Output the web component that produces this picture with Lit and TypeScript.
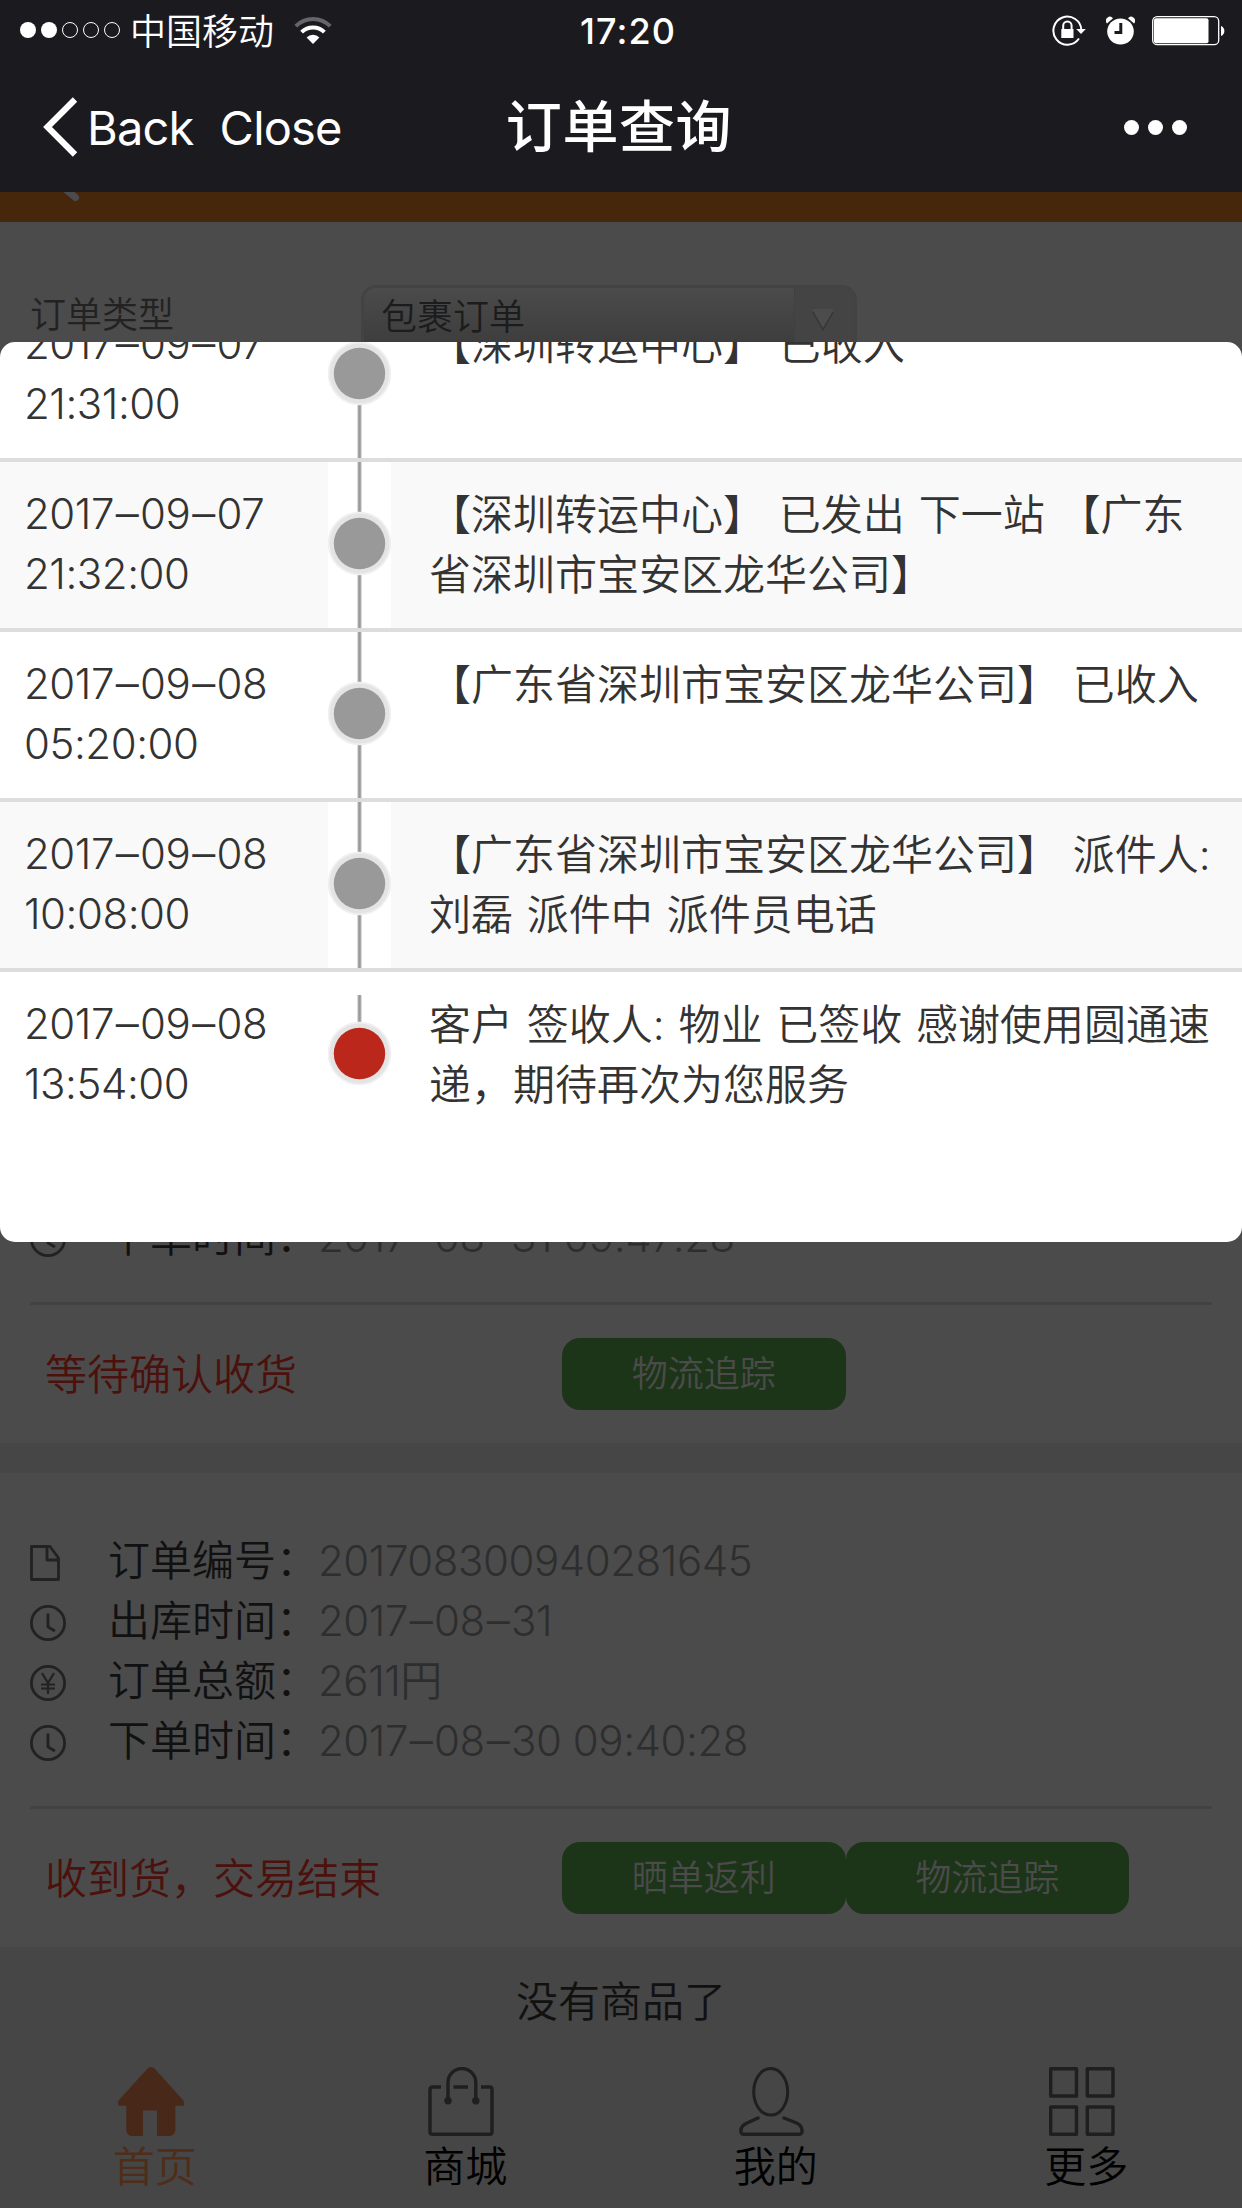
import { LitElement, html, svg, css } from "lit";
import { customElement, property } from "lit/decorators.js";
import { classMap } from "lit/directives/class-map.js";

const box = css`
  *,
  *::before,
  *::after {
    box-sizing: border-box;
  }
  svg {
    display: block;
    flex: none;
  }
`;

/* Numerals are set a little tight, with a wide dash between date parts. */
const numerals = css`
  .num {
    letter-spacing: -0.45px;
  }
  .dash {
    margin: 0 1.8px;
    font-size: 46px;
    line-height: 0;
    vertical-align: -1px;
  }
`;

const withDashes = (text: string) =>
  text.split("–").map((part, i) => (i ? html`<span class="dash">–</span>${part}` : part));

@customElement("status-bar")
class StatusBar extends LitElement {
  static styles = [
    box,
    css`
      :host {
        display: grid;
        grid-template-columns: 1fr auto 1fr;
        align-items: center;
        height: 62px;
        padding: 0 16px 0 19px;
        color: #fff;
      }
      .left {
        display: flex;
        align-items: center;
      }
      .carrier {
        margin: 0 20px 0 9px;
        padding-top: 1px;
        font-size: 36px;
        line-height: 60px;
      }
      .time {
        margin-left: 11px;
        font-size: 36px;
        font-weight: 500;
        letter-spacing: 1.1px;
      }
      .right {
        display: flex;
        align-items: center;
        justify-content: flex-end;
      }
      .lock {
        margin-right: 20px;
      }
      .alarm {
        margin-right: 17px;
      }
    `,
  ];

  render() {
    return html`
      <div class="left">
        <svg width="102" height="18" viewBox="0 0 102 18" fill="none" stroke="#fff">
          <circle cx="9" cy="8" r="8" fill="#fff" stroke="none" />
          <circle cx="30" cy="8" r="8" fill="#fff" stroke="none" />
          <circle cx="51" cy="8" r="7.5" />
          <circle cx="72" cy="8" r="7.5" />
          <circle cx="93" cy="8" r="7.5" />
        </svg>
        <span class="carrier">中国移动</span>
        <svg width="38" height="30" viewBox="0 0 38 30" fill="none" stroke="#fff" stroke-width="4">
          <path d="M1.8 10.2a24 24 0 0 1 34.4 0" stroke="#66656a" />
          <path d="M7.6 16.2a16 16 0 0 1 22.8 0" />
          <path d="M12.6 21.4a9 9 0 0 1 12.8 0L19 28z" fill="#fff" stroke="none" />
        </svg>
      </div>
      <div class="time">17:20</div>
      <div class="right">
        <svg class="lock" width="34" height="32" viewBox="0 0 34 32" fill="none" stroke="#fff" stroke-width="2">
          <path d="M29.4 15A14 14 0 1 0 27 23.5" />
          <path d="M24.2 14h9.6l-4.8 5z" fill="#fff" stroke="none" />
          <path d="M11.2 15v-4.200a4.200 4.200 0 0 1 8.400 0V15" />
          <rect x="9.300" y="14" width="12.200" height="9" fill="#fff" stroke="none" />
        </svg>
        <svg class="alarm" width="29" height="30" viewBox="0 0 29 30">
          <ellipse cx="14.500" cy="15.500" rx="13.300" ry="13" fill="#fff" />
          <path d="M1 7.500L7 2.200A3.600 3.600 0 0 0 1 7.500zM28 7.500L22 2.200A3.600 3.600 0 0 1 28 7.500z" fill="#fff" />
          <path d="M14.800 7v9.500H8.500" fill="none" stroke="#1b1a1f" stroke-width="3" />
        </svg>
        <svg width="74" height="30" viewBox="0 0 74 30">
          <rect x="0.700" y="0.700" width="66" height="28" rx="4.500" fill="none" stroke="#fff" stroke-width="1.300" />
          <rect x="2" y="2.300" width="54.500" height="25" rx="2" fill="#fff" />
          <path d="M69 10a5.400 5.400 0 0 1 0 10z" fill="#fff" />
        </svg>
      </div>
    `;
  }
}

@customElement("nav-bar")
class NavBar extends LitElement {
  static styles = [
    box,
    css`
      :host {
        display: grid;
        grid-template-columns: 1fr auto 1fr;
        align-items: center;
        height: 130px;
        padding: 0 55px 0 42px;
        color: #fff;
      }
      .back {
        display: flex;
        align-items: center;
        font-size: 47px;
        font-weight: 400;
        line-height: 62px;
        letter-spacing: -0.8px;
      }
      .back svg {
        margin-right: 9px;
      }
      .back span {
        padding-top: 2px;
      }
      .back .close {
        margin-left: 26px;
      }
      .title {
        margin: 0 0 0 9px;
        font-size: 56px;
        font-weight: 500;
        letter-spacing: 0.6px;
        line-height: 72px;
      }
      .more {
        display: flex;
        justify-content: flex-end;
        gap: 9px;
      }
      .more i {
        width: 15px;
        height: 15px;
        border-radius: 50%;
        background: #fff;
      }
    `,
  ];

  render() {
    return html`
      <div class="back">
        <svg width="36" height="60" viewBox="0 0 36 60">
          <path d="M33 2.500L5.500 30L33 57.500" fill="none" stroke="#fff" stroke-width="6.200" />
        </svg>
        <span>Back</span><span class="close">Close</span>
      </div>
      <h1 class="title">订单查询</h1>
      <div class="more"><i></i><i></i><i></i></div>
    `;
  }
}

const infoIcons = {
  doc: svg`<path d="M1.500 1.500H20L28.500 13V34.500H1.500zM17 2v13h12" stroke-linejoin="round" />`,
  clock: svg`<circle cx="18" cy="18" r="16.600" /><path d="M18 8.500V22l7 4" />`,
  yen: svg`<circle cx="18" cy="18" r="16.600" />
    <path d="M12 8l6 10 6-10M18 18v11M11 19.500h14M11 23.500h14" stroke-width="2.200" />`,
};

interface Info {
  icon: keyof typeof infoIcons;
  label: string;
  value: string;
}

@customElement("order-card")
class OrderCard extends LitElement {
  @property({ attribute: false }) rows: Info[] = [];
  @property({ attribute: false }) actions: string[] = [];
  @property() status = "";

  static styles = [
    box,
    numerals,
    css`
      :host {
        display: flex;
        flex: none;
        flex-direction: column;
        justify-content: flex-end;
        height: 474px;
        padding: 0 30px 33px;
        background: #4b4b4b;
      }
      .row {
        display: flex;
        align-items: center;
        height: 60px;
        font-size: 42px;
        line-height: 60px;
      }
      .icon {
        width: 78px;
        padding-top: 5px;
      }
      .label,
      .value {
        padding-top: 1px;
      }
      .label {
        width: 210px;
        color: #111;
      }
      .value {
        color: #2e2e2e;
      }
      .foot {
        display: flex;
        align-items: center;
        height: 108px;
        margin-top: 36px;
        padding: 33px 0 0 15px;
        border-top: 3px solid #424242;
      }
      .status {
        width: 517px;
        padding-top: 2px;
        color: #4c110d;
        font-size: 42px;
        line-height: 60px;
      }
      .btn {
        width: 283.500px;
        height: 72px;
        border-radius: 18px;
        background: #1c3518;
        color: #4b4b4b;
        font-size: 36px;
        line-height: 73px;
        text-align: center;
      }
    `,
  ];

  render() {
    return html`
      ${this.rows.map(
        (r) => html`<div class="row">
          <div class="icon">
            <svg width="36" height="36" viewBox="0 0 36 36" fill="none" stroke="#222" stroke-width="2.800">
              ${infoIcons[r.icon]}
            </svg>
          </div>
          <span class="label">${r.label}</span><span class="value num">${withDashes(r.value)}</span>
        </div>`
      )}
      <div class="foot">
        <span class="status">${this.status}</span>
        ${this.actions.map((a) => html`<span class="btn">${a}</span>`)}
      </div>
    `;
  }
}

interface Step {
  date: string;
  time: string;
  text: string;
}

@customElement("track-list")
class TrackList extends LitElement {
  @property({ attribute: false }) steps: Step[] = [];

  static styles = [
    box,
    numerals,
    css`
      :host {
        display: flex;
        flex-direction: column;
        justify-content: flex-end;
        height: 900px;
        padding-bottom: 104px;
        overflow: hidden;
        border-radius: 15px;
        background: #fff;
        color: #333;
        font-size: 42px;
        line-height: 60px;
      }
      .step {
        display: grid;
        flex: none;
        grid-template-columns: 328px 63px 1fr;
        height: 166px;
      }
      .step + .step {
        height: 170px;
        border-top: 4px solid #ddd;
      }
      .when {
        padding: 22px 0 0 24px;
      }
      .what {
        padding: 23px 20px 0 38px;
        word-spacing: 2px;
      }
      .even .when,
      .even .what {
        background: #f9f9f9;
      }
    `,
  ];

  render() {
    return this.steps.map((s, i) => {
      const last = i === this.steps.length - 1;
      return html`<div class=${classMap({ step: true, even: i % 2 === 1 })}>
        <div class="when num">${withDashes(s.date)}<br />${s.time}</div>
        <svg width="63" height="166" viewBox="0 0 63 166">
          <path d=${last ? "M31.500 23V81" : "M31.500 0V166"} stroke="#ccc" stroke-width="4.400" />
          <path d=${last ? "M31.500 23V81" : "M31.500 0V166"} stroke="#999" stroke-width="2.400" />
          <circle cx="31.500" cy="81.500" r="31.800" fill="#f0f0f0" />
          <circle cx="31.500" cy="81.500" r="30" fill="#e4e4e4" />
          <circle cx="31.500" cy="81.500" r="25.700" fill=${last ? "#bb271a" : "#999"} />
        </svg>
        <div class="what">${s.text}</div>
      </div>`;
    });
  }
}

const tabs = [
  {
    label: "首页",
    active: true,
    icon: svg`<path fill="#482919" d="M29.500 1.500Q33 -1.500 36.500 1.500L65 33Q67 36 65.500 38.700H57.400V63Q57 68 52 69H39V43.500H25V69H13Q8.500 68 8.300 63V38.700H1Q-1 36 1 33z" />`,
  },
  {
    label: "商城",
    active: false,
    icon: svg`<path d="M13 20H4.500Q2 20 2 22.500V65Q2 67.300 4.500 67.300H61.500Q64 67.300 64 65V22.500Q64 20 61.500 20H53M25.500 20H40" />
      <path d="M20 34V15.500a13.900 13.900 0 0 1 27.800 0V34" />
      <circle cx="20" cy="33.800" r="3.700" fill="#1f1f1f" stroke="none" />
      <circle cx="47.800" cy="33.800" r="3.700" fill="#1f1f1f" stroke="none" />`,
  },
  {
    label: "我的",
    active: false,
    icon: svg`<ellipse cx="31.700" cy="24.800" rx="17" ry="23.300" stroke-width="3" />
      <path stroke-linecap="round" d="M19 51L7 56.500Q2 59.500 2 63Q1.500 67.300 4.500 67.300H60Q63.500 67.300 63 63Q62.500 58 57.500 56L45 51" />`,
  },
  {
    label: "更多",
    active: false,
    icon: svg`<path stroke-linejoin="round" d="M1.700 1.700H27.500V29H1.700zM38.300 1.700H64V29H38.300zM1.700 40H27.500V67.300H1.700zM38.300 40H64V67.300H38.300z" />`,
  },
];

@customElement("tab-bar")
class TabBar extends LitElement {
  static styles = [
    box,
    css`
      :host {
        display: grid;
        grid-template-columns: repeat(4, 1fr);
        height: 147px;
      }
      .tab {
        display: flex;
        flex-direction: column;
        align-items: center;
        padding-top: 6px;
        color: #000;
        font-size: 42px;
        line-height: 62px;
      }
      .tab svg {
        margin-right: 9px;
      }
      .tab span {
        margin-right: 1px;
      }
      .active {
        color: #4f2d18;
      }
    `,
  ];

  render() {
    return tabs.map(
      (t) => html`<div class=${classMap({ tab: true, active: t.active })}>
        <svg width="66" height="69" viewBox="0 0 66 69" fill="none" stroke=${t.active ? "none" : "#1f1f1f"} stroke-width="3.400">
          ${t.icon}
        </svg>
        <span>${t.label}</span>
      </div>`
    );
  }
}

@customElement("app-root")
class AppRoot extends LitElement {
  static styles = [
    box,
    css`
      :host {
        display: block;
        position: relative;
        width: 1242px;
        height: 2208px;
        overflow: hidden;
        background: #464646;
        font-family: Inter, "Noto Sans CJK SC", sans-serif;
        font-weight: 350;
      }
      .page {
        display: flex;
        flex-direction: column;
        height: 100%;
      }
      .top {
        flex: none;
        background: #1b1a1f;
      }
      .banner {
        flex: none;
        height: 30px;
        padding-left: 60px;
        background: #47270c;
      }
      .filter {
        display: flex;
        flex: none;
        align-items: flex-start;
        height: 717px;
        margin-bottom: 30px;
        padding: 63px 30px 0;
        background: #4b4b4b;
        font-size: 36px;
      }
      .name {
        width: 331px;
        color: #222;
        line-height: 60px;
      }
      .select {
        display: flex;
        width: 496px;
        height: 84px;
        overflow: hidden;
        border: 3px solid #434343;
        border-radius: 15px;
        background: linear-gradient(#4b4b4b, #3c3c3c 60px);
        color: #1c1c1c;
      }
      .chosen {
        flex: 1;
        padding-left: 17px;
        line-height: 58px;
      }
      .arrow {
        width: 60px;
        padding: 21px 0 0 17px;
        border-left: 1px solid #404040;
        background: #444;
      }
      order-card + order-card {
        margin-top: 30px;
      }
      .end {
        flex: 1;
        padding-top: 25px;
        color: #111;
        font-size: 42px;
        line-height: 60px;
        text-align: center;
      }
      .dialog {
        position: absolute;
        top: 342px;
        left: 0;
        width: 100%;
      }
    `,
  ];

  private first: Info[] = [{ icon: "clock", label: "下单时间：", value: "2017–08–31 09:47:28" }];

  private second: Info[] = [
    { icon: "doc", label: "订单编号：", value: "201708300940281645" },
    { icon: "clock", label: "出库时间：", value: "2017–08–31" },
    { icon: "yen", label: "订单总额：", value: "2611円" },
    { icon: "clock", label: "下单时间：", value: "2017–08–30 09:40:28" },
  ];

  private steps: Step[] = [
    { date: "2017–09–07", time: "21:31:00", text: "【深圳转运中心】 已收入" },
    { date: "2017–09–07", time: "21:32:00", text: "【深圳转运中心】 已发出 下一站 【广东省深圳市宝安区龙华公司】" },
    { date: "2017–09–08", time: "05:20:00", text: "【广东省深圳市宝安区龙华公司】 已收入" },
    { date: "2017–09–08", time: "10:08:00", text: "【广东省深圳市宝安区龙华公司】 派件人: 刘磊 派件中 派件员电话" },
    { date: "2017–09–08", time: "13:54:00", text: "客户 签收人: 物业 已签收 感谢使用圆通速递，期待再次为您服务" },
  ];

  render() {
    return html`
      <div class="page" lang="zh-CN">
        <div class="top">
          <status-bar></status-bar>
          <nav-bar></nav-bar>
        </div>
        <div class="banner">
          <svg width="24" height="12" viewBox="0 0 24 12">
            <path d="M4 -4L15.500 5.500" stroke="#4b4b4b" stroke-width="7" stroke-linecap="round" />
          </svg>
        </div>
        <div class="filter">
          <span class="name">订单类型</span>
          <div class="select">
            <span class="chosen">包裹订单</span>
            <span class="arrow">
              <svg width="22" height="22" viewBox="0 0 22 22">
                <path d="M0 3H22L11 22z" fill="#373737" />
                <path d="M0 0H22L11 19z" fill="#4c4c4c" />
              </svg>
            </span>
          </div>
        </div>
        <order-card .rows=${this.first} .actions=${["物流追踪"]} status="等待确认收货"></order-card>
        <order-card .rows=${this.second} .actions=${["晒单返利", "物流追踪"]} status="收到货，交易结束"></order-card>
        <div class="end">没有商品了</div>
        <tab-bar></tab-bar>
      </div>
      <track-list class="dialog" lang="zh-CN" .steps=${this.steps}></track-list>
    `;
  }
}
